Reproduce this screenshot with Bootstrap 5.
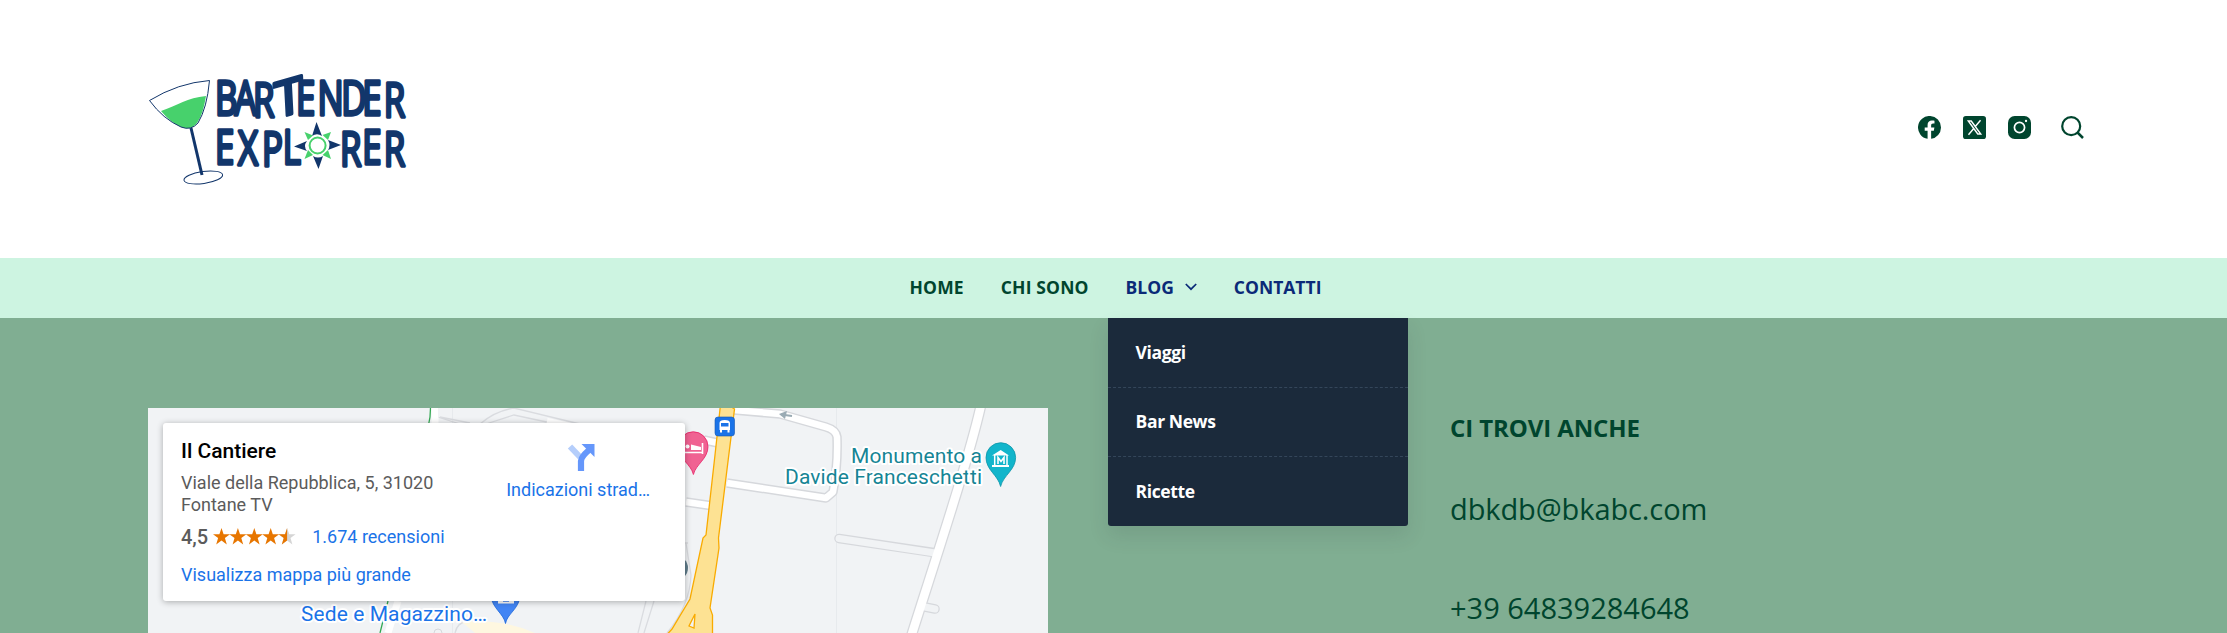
<!DOCTYPE html>
<html lang="it">
<head>
<meta charset="utf-8">
<meta name="viewport" content="width=device-width, initial-scale=1">
<title>Bartender Explorer</title>
<link href="https://cdn.jsdelivr.net/npm/bootstrap@5.3.0/dist/css/bootstrap.min.css" rel="stylesheet">
<style>
:root{--ink:#00452e;--navy:#0a2a78;--mint:#cdf4e1;--sage:#80ae92;--night:#1b2a3b}
body{font-family:"Open Sans","Noto Sans",sans-serif;background:var(--sage);color:var(--ink);height:633px;overflow:hidden}
.site-wrap{width:1936px;margin-left:148px}
.site-head{height:258px}
.site-logo{width:264px;height:120px;margin-top:2px;overflow:visible}
.socials{gap:22px;margin-bottom:3px}
.main-nav{height:60px;background:var(--mint);padding:0 0 2px 4px}
.main-nav .nav{gap:37px}
.main-nav .nav-link{font-size:17.5px;font-weight:700;line-height:27px;color:var(--ink);padding:0;white-space:nowrap}
.main-nav .nav-link.alt{color:var(--navy)}
.main-nav .nav-link.spaced{letter-spacing:.15px}
.chevron{margin-left:11px}
.blog-menu{display:block;width:300px;left:-18px;top:44px;padding:0;margin:0;border:0;border-radius:0 0 3px 3px;background:var(--night);box-shadow:0 10px 20px rgba(41,51,61,.12)}
.blog-menu li{height:69px}
.blog-menu li:last-child{height:70px}
.blog-menu .dropdown-item{height:100%;padding:0 28px;color:#fff;font-size:17.5px;letter-spacing:-.4px;font-weight:700;display:flex;align-items:center}
.blog-menu li+li{border-top:1px dashed #34465a}
.map-box{width:900px;height:225px;margin-top:90px;overflow:hidden;background:#f1f3f5;font-family:Roboto,sans-serif}
.place-card{left:15px;top:15px;width:522px;height:178px;border-radius:3px;background:#fff;box-shadow:0 1px 6px rgba(0,0,0,.3);padding:14px 19px 0 18px;font-size:18px;line-height:22px;color:#5b5b5b}
.place-card a{color:#1a73e8;text-decoration:none}
.place-name{font-size:21px;font-weight:500;line-height:28px;color:#000}
.place-address{margin-top:7px}
.place-rating{margin-top:10px}
.rating-value{font-size:20px;font-weight:500}
.rating-stars{margin-left:5px}
.reviews{margin-left:16px}
.bigger-map{margin-top:16px}
.directions{margin-right:16px;padding-top:7px}
.directions svg{margin:0 0 8px 61px}
.info-col{margin-left:402px;padding-top:92px;white-space:nowrap}
.info-title{font-size:24px;font-weight:700;line-height:36px;margin:0;letter-spacing:-.1px}
.info-line{font-size:29px;line-height:44px;margin:0}
.info-mail{margin-top:41px;letter-spacing:-.1px}
.info-phone{margin-top:55px}
</style>
</head>
<body>
<header class="site-head bg-white">
  <div class="site-wrap h-100 d-flex align-items-center justify-content-between">
    <svg class="site-logo" viewBox="148 70 264 120">
      <path d="M149.500 100.500Q178 83 209.500 80.500Q207 108 198 123Q191 131 181 127Q163 119 149.500 100.500Z" fill="#fff"/>
      <path d="M161 111C178 105 187 98 206 96Q203 115 197 123Q191 131 181 127Q170 122 161 111Z" fill="#47d16c"/>
      <path d="M149.500 100.500Q178 83 209.500 80.500Q207 108 198 123Q191 131 181 127Q163 119 149.500 100.500Z" fill="none" stroke="#12366b"/>
      <path d="M191 128L202 175" stroke="#12366b" stroke-width="3"/>
      <ellipse cx="203.300" cy="177.500" rx="19.500" ry="6" transform="rotate(-8 203.300 177.500)" fill="none" stroke="#12366b"/>
      <g fill="#12366b" stroke="#12366b" stroke-width="3.300" stroke-linejoin="round" font-family="Open Sans" font-size="47">
        <text transform="scale(.74 1)" x="290.500 317 342" y="115.500 115.500 117.500">BAR</text>
        <text transform="translate(289.500 114.500) rotate(-3) skewY(-13) scale(1.1 1.04)" x="-13" y="0">T</text>
        <text transform="scale(.74 1)" x="400 429 461 489.500 518.500" y="115.500 115.500 115.500 115.500 117.500">ENDER</text>
        <text transform="scale(.74 1)" x="290.500 321.500 354 382" y="164.500 165 166 164.500">EXPL</text>
        <text transform="scale(.74 1)" x="459.500 489.500 518.500" y="166 164.500 166.500">RER</text>
      </g>
      <circle cx="317.500" cy="145.500" r="13" fill="#fff"/>
      <g fill="#12366b"><path d="M316.500 122L322 136Q317 132.500 312 136Z"/><path d="M318.500 169L323 156Q318 159 313 156Z"/><path d="M294 146.500L307 141Q303 146 307 151Z"/><path d="M341 145L328 140Q331 145 328 150Z"/></g>
      <g fill="#47d16c"><path d="M304.500 132L313 135.500L308 140Z"/><path d="M331 132L328 140L322.500 135Z"/><path d="M304.500 159L308 150L313 155Z"/><path d="M331 159L322.500 155L328 150Z"/></g>
      <circle cx="317.600" cy="145.500" r="8" fill="#fff" stroke="#47d16c" stroke-width="2"/>
    </svg>
    <div class="socials d-flex align-items-center">
      <svg width="23" height="23" viewBox="0 0 24 24" fill="#00452e"><path d="M24 12A12 12 0 1 0 10 23.800V15.500H7V12h3V9.400c0-3 1.800-4.700 4.500-4.700 1.300 0 2.700.2 2.700.2v3h-1.500c-1.500 0-2 .9-2 1.900V12h3.400l-.6 3.500h-2.800v8.300A12 12 0 0 0 24 12z"/></svg>
      <svg width="23" height="23" viewBox="0 0 24 24"><rect width="24" height="24" rx="3" fill="#00452e"/><path d="M5.500 5.200H8.600L18.500 18.800H15.400ZM18.300 4.500L13 10.700M11 13.300L5.700 19.500" fill="none" stroke="#fff" stroke-width="1.500"/></svg>
      <svg width="23" height="23" viewBox="0 0 24 24"><rect width="24" height="24" rx="7" fill="#00452e"/><circle cx="12" cy="12" r="5.300" fill="none" stroke="#fff" stroke-width="1.800"/><circle cx="18.800" cy="5.200" r="1.200" fill="#fff"/></svg>
      <svg class="ms-2" width="23" height="23" viewBox="0 0 23 23" fill="none" stroke="#00452e" stroke-width="2.200"><circle cx="10.200" cy="10.200" r="9"/><path d="M16.500 16.500L22 22" stroke-width="2.500"/></svg>
    </div>
  </div>
</header>
<nav class="main-nav d-flex justify-content-center align-items-center">
  <ul class="nav flex-nowrap">
    <li class="nav-item"><a class="nav-link spaced" href="#">HOME</a></li>
    <li class="nav-item"><a class="nav-link spaced" href="#">CHI SONO</a></li>
    <li class="nav-item dropdown position-relative"><a class="nav-link alt d-flex align-items-center" href="#">BLOG
      <svg class="chevron" width="12" height="8" viewBox="0 0 12 8" fill="none" stroke="#0a2a78" stroke-width="1.700"><path d="M.8 1L6 6.200L11.200 1"/></svg></a>
      <ul class="dropdown-menu blog-menu">
        <li><a class="dropdown-item" href="#">Viaggi</a></li>
        <li><a class="dropdown-item" href="#">Bar News</a></li>
        <li><a class="dropdown-item" href="#">Ricette</a></li>
      </ul></li>
    <li class="nav-item"><a class="nav-link alt" href="#">CONTATTI</a></li>
  </ul>
</nav>
<main class="site-wrap d-flex align-items-start">
  <div class="map-box position-relative flex-shrink-0">
    <svg class="d-block" width="900" height="225" viewBox="148 408 900 225">
      <path d="M836.500 408V633M452.500 408V633" stroke="#e7eaed"/>
      <g fill="none" stroke="#dadce0" stroke-width="1.300">
        <path d="M438 408V417L460 424M480 424Q495 411 514 408L580 424M486 424L514 415L556 424M440 417L470 423M686 543L691 575Q690 605 667 633M682 543L688 543M646 601L638 633M654 601L644 633M455 633Q458 620 470 622L510 633"/>
      </g>
      <path d="M462 622Q500 618 535 633H475Z" fill="#fef7e0"/>
      <path d="M430.500 408L430 417L428.500 425M388 601L380 633" stroke="#34a853" stroke-width="1.300" fill="none"/>
      <path d="M435 408V424M398 601L388 633" stroke="#fff" stroke-width="7"/>
      <path d="M547 421L575 427" stroke="#fff" stroke-width="6"/>
      <g fill="none" stroke-linejoin="round">
        <g stroke="#d6d8dc" stroke-width="9.500"><path d="M734 410L780 414L826 427Q836 430 837 437Q838 465 833 492L826 498L727 483M686 502L710 505.500M704 440L718 443"/><path d="M981 405C970 455 937 555 910 640" stroke-width="11"/><path d="M839 538.500L937 553M925 607L935 609" stroke-linecap="round"/></g>
        <path d="M839 538.500L935 553M925 607L935 609" stroke="#f1f3f5" stroke-width="7" stroke-linecap="round"/>
        <g stroke="#fff" stroke-width="6.500"><path d="M734 410L780 414L826 427Q836 430 837 437Q838 465 833 492L826 498L727 483M686 502L710 505.500M704 440L718 443"/><path d="M981 405C970 455 937 555 910 640" stroke-width="8.500"/></g>
      </g>
      <path d="M721 400L734.500 409L718.500 538L719 548L710 608L712.500 615V640H662L672 629L690 599L703 538L706 535L715 455Z" fill="#fde293" stroke="#f9ab00" stroke-width="1.300"/>
      <path d="M695 614L694 628L689 626Z" fill="#f1f3f5" stroke="#f9ab00" stroke-width="1.300"/>
      <path d="M792 416L781 414.500" stroke="#9aabb4" stroke-width="2"/><path d="M779 414L787 411L785 419Z" fill="#9aabb4"/>
      <rect x="715" y="417" width="19.500" height="19" rx="3" fill="#1a73e8" stroke="#1557b0" stroke-width=".6"/>
      <path d="M719.500 423Q719.500 420 724.700 420T730 423V430H719.500Z" fill="#fff"/><path d="M721 423H728.500V426.500H721Z" fill="#1a73e8"/><path d="M721 430V432.500M728.500 430V432.500" stroke="#fff" stroke-width="2"/>
      <path d="M693.400 474.500C691 464 678.500 459 678.500 446.500A14.700 14.700 0 0 1 708 446.500C708 459 696 464 693.400 474.500Z" fill="#f06292" stroke="#e91e63" stroke-width=".8"/>
      <path d="M684 452.500H702.500M702.500 443V454" stroke="#fff" stroke-width="1.600"/><circle cx="687.500" cy="446.500" r="2" fill="#fff"/><path d="M691 444.500L701 447V450H691Z" fill="#fff"/>
      <circle cx="676" cy="568" r="12" fill="#607d8b"/>
      <path d="M1000.600 486.500C998 475 986 470 986 457.500A14.800 14.800 0 0 1 1015.600 457.500C1015.600 470 1003.500 475 1000.600 486.500Z" fill="#12b5cb" stroke="#0c95a8" stroke-width=".8"/>
      <path d="M992 455.500L1000.700 450L1009 455.500ZM992 465H1009V467H992Z" fill="#fff"/><path d="M994.700 455V466M1007 455V466" stroke="#fff" stroke-width="1.500"/><path d="M998 464V457.500L1001 461.500L1004 457.500V464" fill="none" stroke="#fff" stroke-width="1.600"/>
      <path d="M505.500 623.500C504 614 492 608 491 596H520C519 609 507 614 505.500 623.500Z" fill="#4285f4" stroke="#1a66d8" stroke-width=".8"/><path d="M498 596H514V603.500H498Z" fill="#fff"/><path d="M503 601H509" stroke="#4285f4" stroke-width="1.500"/>
      <circle cx="438" cy="633" r="4" fill="#f1f3f5" stroke="#d6d8dc"/>
      <g font-family="Roboto" font-size="21" stroke="#fff" stroke-width="4" stroke-linejoin="round" paint-order="stroke">
        <text x="851" y="462.500" textLength="131" fill="#168595">Monumento a</text>
        <text x="785" y="483.500" textLength="197" fill="#168595">Davide Franceschetti</text>
        <text x="301" y="620.500" textLength="186" fill="#1a73e8">Sede e Magazzino…</text>
      </g>
    </svg>
    <div class="place-card position-absolute d-flex justify-content-between">
      <div>
        <div class="place-name">Il Cantiere</div>
        <div class="place-address">Viale della Repubblica, 5, 31020<br>Fontane TV</div>
        <div class="place-rating d-flex align-items-center"><span class="rating-value">4,5</span>
          <svg class="rating-stars" width="83" height="18" viewBox="0 0 83 18"><defs><path id="star" d="M8.500 0L10.600 6.200H17L11.900 10L13.800 16.500L8.500 12.600L3.200 16.500L5.100 10L0 6.200H6.400Z"/></defs><g fill="#e77600"><use href="#star"/><use href="#star" x="16.400"/><use href="#star" x="32.800"/><use href="#star" x="49.200"/></g><use href="#star" x="65.600" fill="#d5d5d5"/><path d="M74.100 0V12.600L68.800 16.500L70.700 10L65.600 6.200H72Z" fill="#e77600"/></svg>
          <a class="reviews" href="#">1.674 recensioni</a></div>
        <div class="bigger-map"><a href="#">Visualizza mappa più grande</a></div>
      </div>
      <div class="directions">
        <svg class="d-block" width="28" height="27" viewBox="0 0 28 27"><path d="M3 2.500L13 13" stroke="#b5cefb" stroke-width="6"/><path d="M14 27V17Q14 13 22 6" fill="none" stroke="#6597fb" stroke-width="6.200"/><path d="M14.500 0H27.500V13Z" fill="#6597fb"/></svg>
        <a href="#">Indicazioni strad…</a>
      </div>
    </div>
  </div>
  <section class="info-col">
    <h2 class="info-title">CI TROVI ANCHE</h2>
    <p class="info-line info-mail">dbkdb@bkabc.com</p>
    <p class="info-line info-phone">+39 64839284648</p>
  </section>
</main>
<script src="https://cdn.jsdelivr.net/npm/bootstrap@5.3.0/dist/js/bootstrap.bundle.min.js"></script>
</body>
</html>
